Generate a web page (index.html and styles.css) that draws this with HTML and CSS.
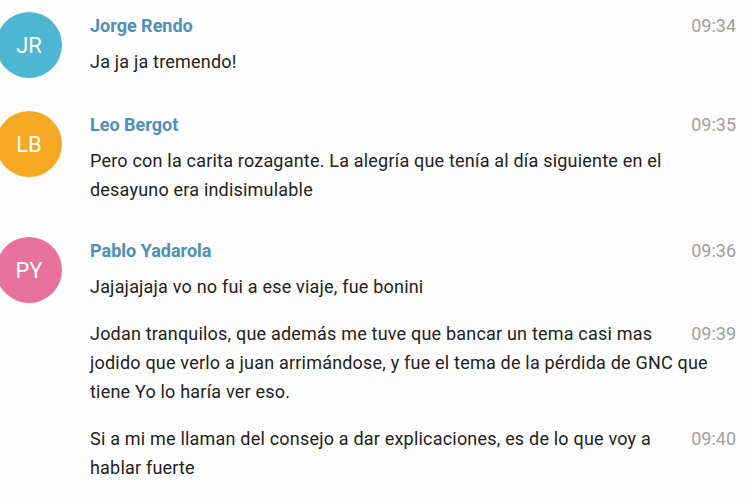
FILE: index.html
```html
<!DOCTYPE html>
<html>
<head>
    <title>Chat</title>
    <link rel="stylesheet" href="styles.css">
</head>
<body>
    <div class="chat">
        <div class="group">
            <div class="avatar blue">JR</div>
            <div class="messages">
                <div class="head">
                    <span class="name">Jorge Rendo</span>
                    <span class="time">09:34</span>
                </div>
                <div class="text">Ja ja ja tremendo!</div>
            </div>
        </div>

        <div class="group">
            <div class="avatar orange">LB</div>
            <div class="messages">
                <div class="head">
                    <span class="name">Leo Bergot</span>
                    <span class="time">09:35</span>
                </div>
                <div class="text">Pero con la carita rozagante. La alegría que tenía al día siguiente en el desayuno era indisimulable</div>
            </div>
        </div>

        <div class="group">
            <div class="avatar pink">PY</div>
            <div class="messages">
                <div class="head">
                    <span class="name">Pablo Yadarola</span>
                    <span class="time">09:36</span>
                </div>
                <div class="text">Jajajajaja vo no fui a ese viaje, fue bonini</div>
                <div class="text followup">
                    <span class="time">09:39</span>
                    Jodan tranquilos, que además me tuve que bancar un tema casi mas jodido que verlo a juan arrimándose, y fue el tema de la pérdida de GNC que tiene Yo lo haría ver eso.
                </div>
                <div class="text followup">
                    <span class="time">09:40</span>
                    Si a mi me llaman del consejo a dar explicaciones, es de lo que voy a hablar fuerte
                </div>
            </div>
        </div>
    </div>
</body>
</html>
```

FILE: styles.css
```css
body {
    margin: 0;
    background: #fdfdfd;
    font-family: Roboto, "Liberation Sans", sans-serif;
    color: #222;
    overflow: hidden;
}

.chat {
    padding: 12px 14px 0 0;
}

.group {
    display: flex;
    align-items: flex-start;
    margin-bottom: 33px;
}

.avatar {
    flex: 0 0 66px;
    width: 66px;
    height: 66px;
    margin-left: -4px;
    margin-right: 28px;
    border-radius: 50%;
    color: #fff;
    font-size: 22px;
    display: flex;
    justify-content: center;
    align-items: center;
}

.avatar.blue { background: #4db6d3; }
.avatar.orange { background: #f6a823; }
.avatar.pink { background: #e8729c; }

.messages {
    flex: 1;
    padding-top: 1px;
}

.head {
    display: flex;
    justify-content: space-between;
    align-items: center;
    height: 24px;
    margin-bottom: 10px;
}

.name {
    font-size: 18px;
    font-weight: bold;
    color: #4e90b9;
}

.time {
    font-size: 18px;
    letter-spacing: 0;
    color: #a0a0a0;
}

.text {
    font-size: 18px;
    line-height: 29px;
    letter-spacing: 0.2px;
}

.followup {
    margin-top: 18px;
}

.followup .time {
    float: right;
    margin-left: 20px;
}
```
